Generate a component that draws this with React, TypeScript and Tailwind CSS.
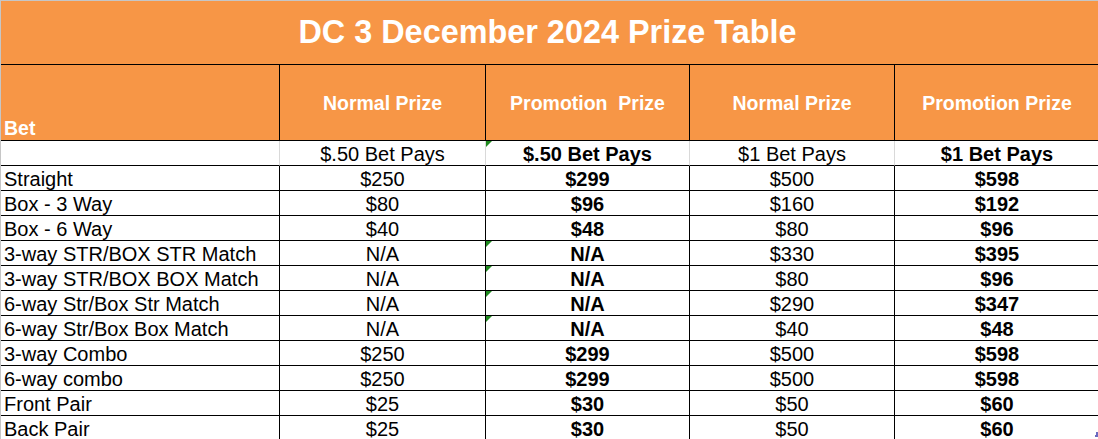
import React from "react";

type Row = { bet: string; v: [string, string, string, string]; tri?: boolean };

const rows: Row[] = [
  { bet: "Straight", v: ["$250", "$299", "$500", "$598"] },
  { bet: "Box - 3 Way", v: ["$80", "$96", "$160", "$192"] },
  { bet: "Box - 6 Way", v: ["$40", "$48", "$80", "$96"] },
  { bet: "3-way STR/BOX STR Match", v: ["N/A", "N/A", "$330", "$395"], tri: true },
  { bet: "3-way STR/BOX BOX Match", v: ["N/A", "N/A", "$80", "$96"], tri: true },
  { bet: "6-way Str/Box Str Match", v: ["N/A", "N/A", "$290", "$347"], tri: true },
  { bet: "6-way Str/Box Box Match", v: ["N/A", "N/A", "$40", "$48"], tri: true },
  { bet: "3-way Combo", v: ["$250", "$299", "$500", "$598"] },
  { bet: "6-way combo", v: ["$250", "$299", "$500", "$598"] },
  { bet: "Front Pair", v: ["$25", "$30", "$50", "$60"] },
  { bet: "Back Pair", v: ["$25", "$30", "$50", "$60"] },
];

const widths = ["w-[279px]", "w-[206px]", "w-[204px]", "w-[205px]", "w-[205px]"];

function Tri() {
  return (
    <span className="absolute left-0 top-0 h-0 w-0 border-t-[6px] border-r-[6px] border-t-[#1e8a1e] border-r-transparent" />
  );
}

export default function App() {
  return (
    <div
      className="relative w-[1098px] h-[439px] overflow-hidden bg-white text-black"
      style={{ fontFamily: '"Liberation Sans", Arial, sans-serif' }}
    >
      <div className="w-[1100px] border-t border-l border-[#c6c6c6]">
        {/* Title */}
        <div className="h-[64px] border-b border-black bg-[#f79646] flex items-center justify-center w-[1099px]">
          <span className="text-white font-bold text-[32.4px] leading-none pr-[6px]">
            DC 3 December 2024 Prize Table
          </span>
        </div>

        {/* Header */}
        <div className="flex h-[76px] bg-[#f79646] text-white font-bold text-[19.5px] leading-[24px]">
          <div className={`${widths[0]} border-r border-b border-black flex items-end pl-[3px]`}>Bet</div>
          <div className={`${widths[1]} border-r border-b border-black flex items-center justify-center`}>
            Normal Prize
          </div>
          <div className={`${widths[2]} border-r border-b border-black flex items-center justify-center whitespace-pre`}>
            {"Promotion  Prize"}
          </div>
          <div className={`${widths[3]} border-r border-b border-black flex items-center justify-center`}>
            Normal Prize
          </div>
          <div className={`${widths[4]} border-r border-b border-black flex items-center justify-center`}>
            Promotion Prize
          </div>
        </div>

        {/* Sub header */}
        <div className="flex h-[25px] text-[20px] leading-[26px]">
          <div className={`${widths[0]} border-r border-r-[#d9d9d9] border-b border-b-black`} />
          <div className={`${widths[1]} border-r border-r-[#d9d9d9] border-b border-b-black text-center`}>$.50 Bet Pays</div>
          <div className={`${widths[2]} relative border-r border-r-[#d9d9d9] border-b border-b-black text-center font-bold`}>
            <Tri />
            $.50 Bet Pays
          </div>
          <div className={`${widths[3]} border-r border-r-[#d9d9d9] border-b border-b-black text-center`}>$1 Bet Pays</div>
          <div className={`${widths[4]} border-r border-r-[#d9d9d9] border-b border-b-black text-center font-bold`}>$1 Bet Pays</div>
        </div>

        {/* Data rows */}
        {rows.map((r) => (
          <div key={r.bet} className="flex h-[25px] text-[20px] leading-[26px]">
            <div className={`${widths[0]} border-r border-b border-black pl-[3px] whitespace-nowrap`}>{r.bet}</div>
            <div className={`${widths[1]} border-r border-b border-black text-center`}>{r.v[0]}</div>
            <div className={`${widths[2]} relative border-r border-b border-black text-center font-bold`}>
              {r.tri && <Tri />}
              {r.v[1]}
            </div>
            <div className={`${widths[3]} border-r border-b border-black text-center`}>{r.v[2]}</div>
            <div className={`${widths[4]} border-r border-b border-black text-center font-bold`}>{r.v[3]}</div>
          </div>
        ))}
      </div>
      <span className="absolute left-[1095px] top-[432px] w-[3px] h-[5px] border-r-2 border-b-2 border-[#6b6bc0]" />
    </div>
  );
}
